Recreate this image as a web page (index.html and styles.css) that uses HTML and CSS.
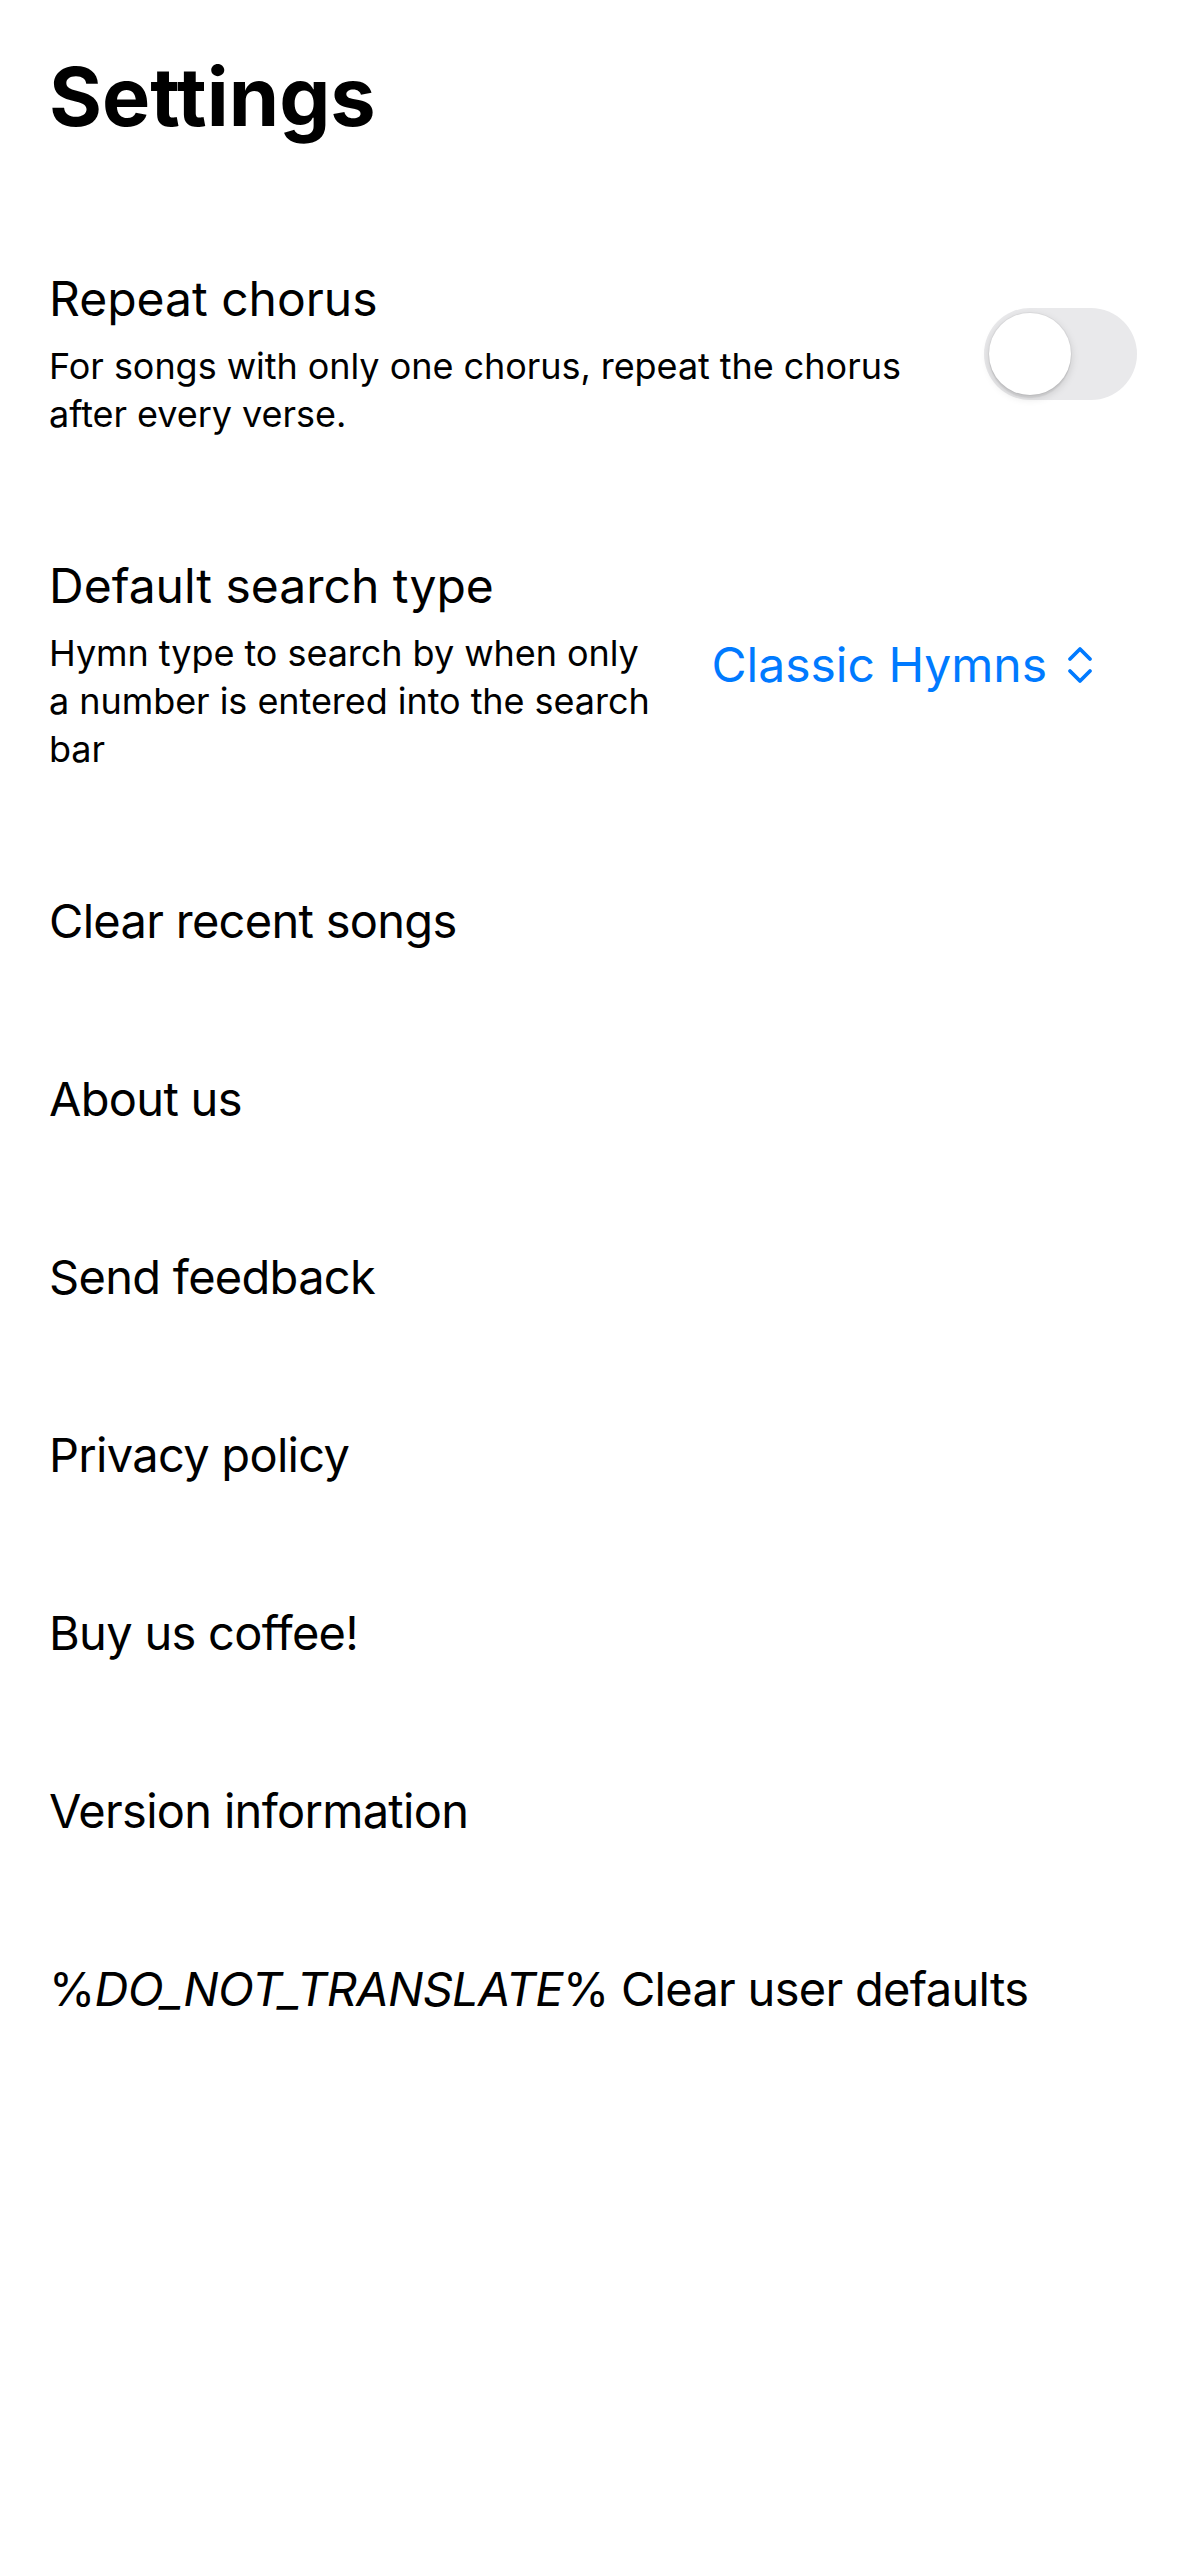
FILE: index.html
```html
<!DOCTYPE html>
<html lang="en">
<head>
<meta charset="utf-8">
<title>Settings</title>
<link rel="stylesheet" href="styles.css">
</head>
<body>
<main class="screen">
  <h1 class="page-title">Settings</h1>
  <ul class="settings">
    <li class="row row-detail">
      <div class="row-text">
        <div class="row-title row-title-detail">Repeat chorus</div>
        <div class="row-desc">For songs with only one chorus, repeat the chorus after every verse.</div>
      </div>
      <div class="toggle" role="switch" aria-checked="false">
        <span class="knob"></span>
      </div>
    </li>
    <li class="row row-detail row-picker">
      <div class="row-text">
        <div class="row-title row-title-detail">Default search type</div>
        <div class="row-desc">Hymn type to search by when only a number is entered into the search bar</div>
      </div>
      <div class="picker">
        <span class="picker-label">Classic Hymns</span>
        <svg class="picker-icon" viewBox="0 0 26 42" width="26" height="42" aria-hidden="true">
          <path d="M3 15 L13 5 L23 15" fill="none" stroke="#007AFF" stroke-width="3.8" stroke-linecap="round" stroke-linejoin="round"/>
          <path d="M3 27 L13 37 L23 27" fill="none" stroke="#007AFF" stroke-width="3.8" stroke-linecap="round" stroke-linejoin="round"/>
        </svg>
      </div>
    </li>
    <li class="row"><span class="row-title">Clear recent songs</span></li>
    <li class="row"><span class="row-title">About us</span></li>
    <li class="row"><span class="row-title">Send feedback</span></li>
    <li class="row"><span class="row-title">Privacy policy</span></li>
    <li class="row"><span class="row-title">Buy us coffee!</span></li>
    <li class="row"><span class="row-title">Version information</span></li>
    <li class="row"><span class="row-title">%<em>DO_NOT_TRANSLATE</em>% Clear user defaults</span></li>
  </ul>
</main>
</body>
</html>
```
FILE: styles.css
```css
html, body {
  margin: 0;
  padding: 0;
  background: #ffffff;
}

body {
  font-family: Inter, "Noto Sans", "Liberation Sans", sans-serif;
  color: #000000;
  -webkit-font-smoothing: antialiased;
}

.screen {
  width: 1179px;
  min-height: 2556px;
  box-sizing: border-box;
}

.page-title {
  margin: 0;
  padding: 47px 49px 0;
  height: 100px;
  line-height: 100px;
  font-size: 81px;
  font-weight: 700;
  letter-spacing: 0;
}

.settings {
  list-style: none;
  margin: 63px 0 0;
  padding: 0;
}

.row {
  display: flex;
  align-items: center;
  padding: 59px 42px 59px 49px;
  gap: 30px;
}

.row-picker {
  gap: 46px;
}

.row-text {
  flex: 1;
  min-width: 0;
}

.row-title {
  display: block;
  font-size: 47px;
  line-height: 60px;
  font-weight: 400;
  letter-spacing: -0.7px;
}

.row-title-detail {
  font-size: 48px;
  letter-spacing: 0;
}

.row-title em {
  font-style: italic;
}

.row-desc {
  margin-top: 13px;
  font-size: 36px;
  line-height: 48px;
  font-weight: 400;
  letter-spacing: -0.05px;
}

.toggle {
  flex: none;
  width: 153px;
  height: 92px;
  border-radius: 46px;
  background: #e9e9eb;
  display: flex;
  align-items: center;
  padding: 0 5px;
  box-sizing: border-box;
}

.knob {
  width: 82px;
  height: 82px;
  border-radius: 50%;
  background: #ffffff;
  box-shadow: 0 3px 8px rgba(0, 0, 0, 0.15), 0 3px 1px rgba(0, 0, 0, 0.06), 0 0 0 1px rgba(0, 0, 0, 0.04);
}

.picker {
  flex: none;
  display: flex;
  align-items: center;
  gap: 20px;
  margin-right: 44px;
  color: #007aff;
}

.picker-label {
  font-size: 48px;
  line-height: 60px;
}

.picker-icon {
  display: block;
}
```
